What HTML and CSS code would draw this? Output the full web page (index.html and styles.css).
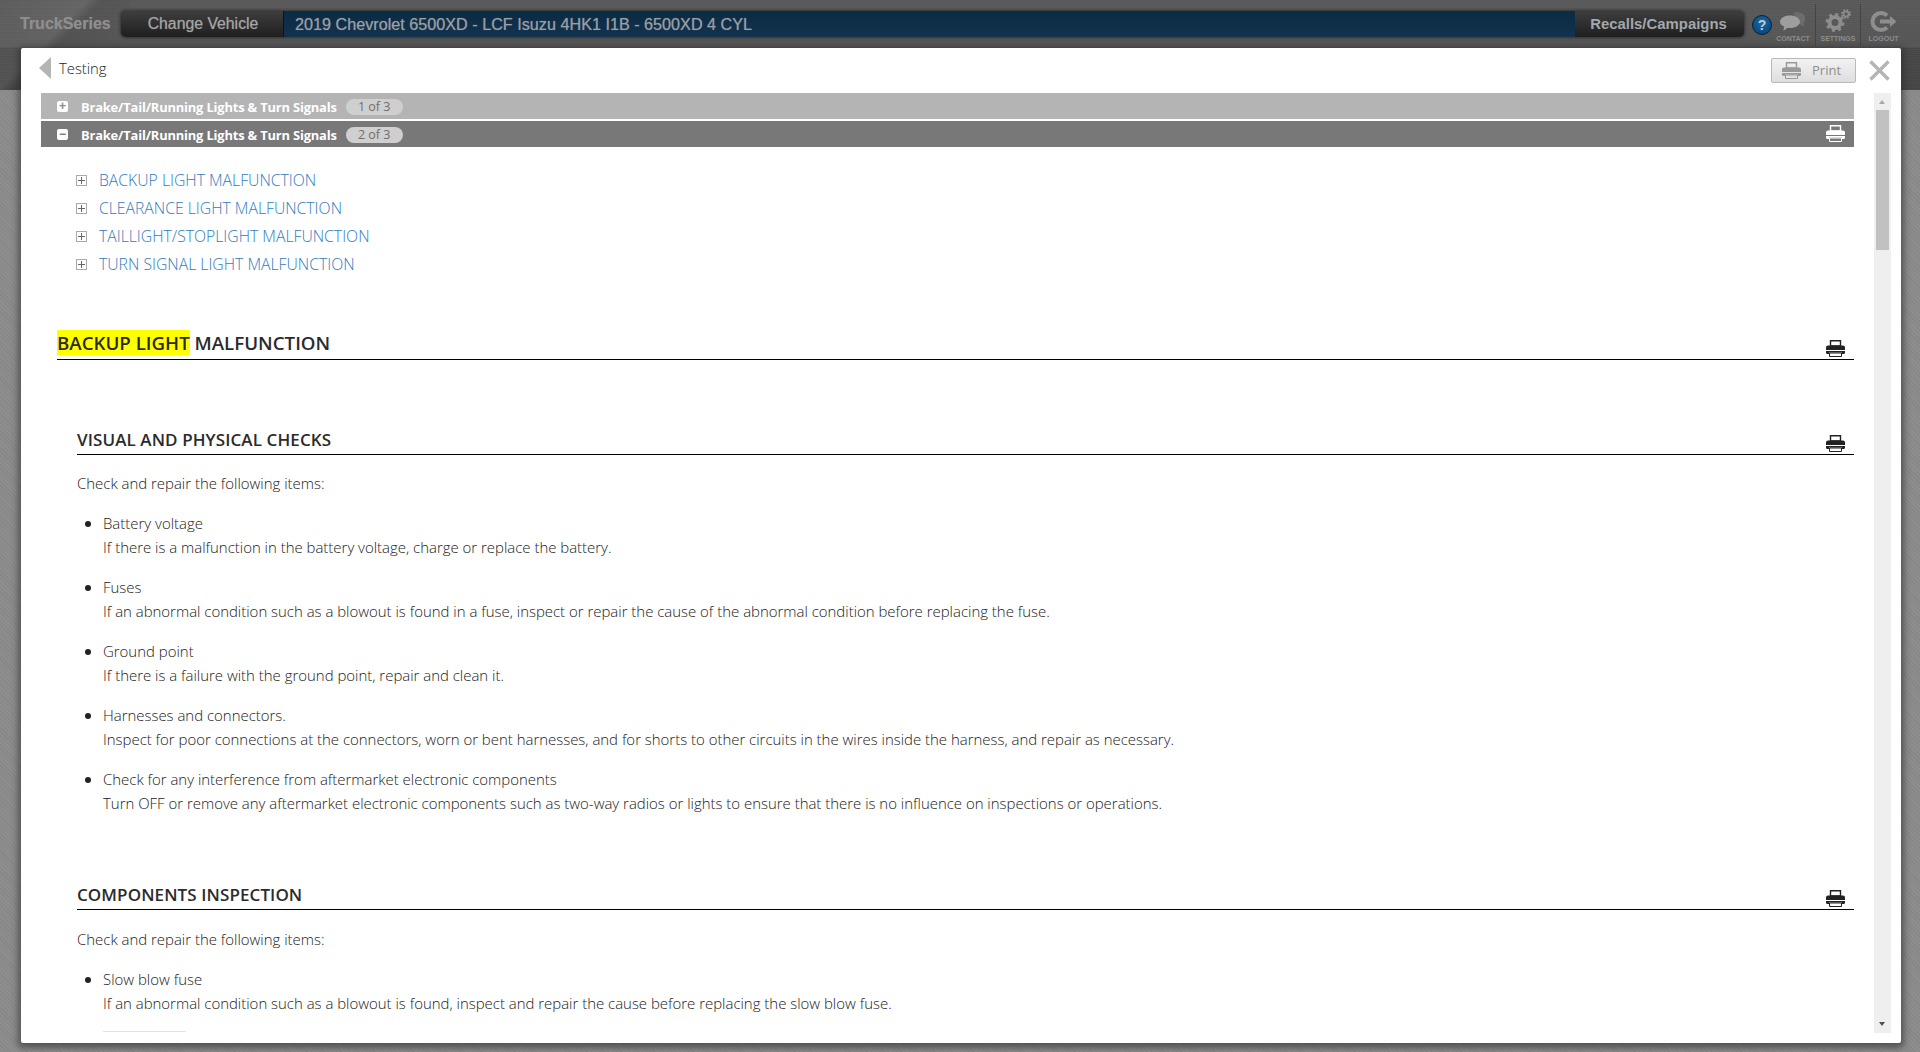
FILE: index.html
```html
<!DOCTYPE html>
<html lang="en">
<head>
<meta charset="utf-8">
<title>Testing</title>
<link rel="stylesheet" href="styles.css">
</head>
<body>
<svg class="defs" width="0" height="0" aria-hidden="true">
  <symbol id="printer" viewBox="0 0 19 17">
    <path d="M4.500.7h10v5.300h-10z" fill="none" stroke="currentColor" stroke-width="1.400"/>
    <path d="M2 5.500h15a2 2 0 0 1 2 2V10H0V7.500a2 2 0 0 1 2-2z" fill="currentColor"/>
    <path d="M0 11h19v1.500a1.500 1.500 0 0 1-1.500 1.500H16v-1.500H3V14H1.500A1.500 1.500 0 0 1 0 12.500z" fill="currentColor"/>
    <path d="M3.500 13h12v3.500h-12z" fill="none" stroke="currentColor" stroke-width="1"/>
  </symbol>
</svg>
<div class="page">
  <header class="topbar">
    <div class="brand">TruckSeries</div>
    <div class="vehicle-bar">
      <div class="btn-dark change">Change Vehicle</div>
      <div class="vehicle-name">2019 Chevrolet 6500XD - LCF Isuzu 4HK1 I1B - 6500XD 4 CYL</div>
      <div class="btn-dark recalls">Recalls/Campaigns</div>
    </div>
    <div class="help">?</div>
    <nav class="tools">
      <div class="tool">
        <svg class="tool-icon" width="26" height="20" viewBox="0 0 26 20"><path d="M13 1c3-1.500 11-1.500 12 4 .5 3-.5 5-1.500 6l1 4-5-3z" fill="#6c6c6c"/><path d="M10 3.500c5.500 0 10 2.700 10 6.200S15.500 16 10 16c-1 0-1.500 0-2.500-.2L3.500 19l.5-4.500C1.500 13.200 0 11.700 0 9.700 0 6.200 4.500 3.500 10 3.500z" fill="#9e9e9e"/></svg>
        <span>CONTACT</span>
      </div>
      <div class="tool">
        <svg class="tool-icon" width="26" height="23" viewBox="0 0 26 23"><circle cx="10" cy="13.500" r="5.500" fill="none" stroke="#8e8e8e" stroke-width="4"/><circle cx="10" cy="13.500" r="8" fill="none" stroke="#8e8e8e" stroke-width="3" stroke-dasharray="3 3.280"/><circle cx="21" cy="5" r="2.500" fill="none" stroke="#8e8e8e" stroke-width="1.500"/><circle cx="21" cy="5" r="4" fill="none" stroke="#8e8e8e" stroke-width="1.800" stroke-dasharray="1.800 1.340"/></svg>
        <span>SETTINGS</span>
      </div>
      <div class="tool">
        <svg class="tool-icon" width="27" height="21" viewBox="0 0 27 21"><path d="M17 4.500A8.500 8.500 0 1 0 17 16.500" fill="none" stroke="#8e8e8e" stroke-width="4"/><path d="M10 8.500h10V5l6.500 5.500L20 16v-3.500H10z" fill="#8e8e8e"/></svg>
        <span>LOGOUT</span>
      </div>
    </nav>
  </header>

  <main class="modal">
    <div class="modal-head">
      <div class="back"></div>
      <div class="modal-title">Testing</div>
      <div class="print-btn"><svg class="print-icon"><use href="#printer"/></svg><span class="print-label">Print</span></div>
      <svg class="close" width="21" height="21" viewBox="0 0 21 21"><path d="M1.500 1.500l18 18M19.500 1.500l-18 18" stroke="#b4b4b4" stroke-width="3.400" fill="none"/></svg>
    </div>
    <div class="modal-body">
      <div class="doc">
        <div class="section-bar bar-light">
          <span class="toggle">+</span><span class="bar-text">Brake/Tail/Running Lights &amp; Turn Signals</span><span class="count">1 of 3</span>
        </div>
        <div class="section-bar bar-dark">
          <span class="toggle">−</span><span class="bar-text">Brake/Tail/Running Lights &amp; Turn Signals</span><span class="count">2 of 3</span>
          <svg class="bar-print"><use href="#printer"/></svg>
        </div>

        <ul class="toc">
          <li><span class="tree-box"></span><a>BACKUP LIGHT MALFUNCTION</a></li>
          <li><span class="tree-box"></span><a>CLEARANCE LIGHT MALFUNCTION</a></li>
          <li><span class="tree-box"></span><a>TAILLIGHT/STOPLIGHT MALFUNCTION</a></li>
          <li><span class="tree-box"></span><a>TURN SIGNAL LIGHT MALFUNCTION</a></li>
        </ul>

        <h1 class="title"><span><mark>BACKUP LIGHT</mark> MALFUNCTION</span><svg class="rule-print"><use href="#printer"/></svg></h1>

        <section class="block first">
          <h2 class="subtitle"><span>VISUAL AND PHYSICAL CHECKS</span><svg class="rule-print"><use href="#printer"/></svg></h2>
          <p class="lead">Check and repair the following items:</p>
          <ul class="items">
            <li>Battery voltage<br>If there is a malfunction in the battery voltage, charge or replace the battery.</li>
            <li>Fuses<br>If an abnormal condition such as a blowout is found in a fuse, inspect or repair the cause of the abnormal condition before replacing the fuse.</li>
            <li>Ground point<br>If there is a failure with the ground point, repair and clean it.</li>
            <li>Harnesses and connectors.<br>Inspect for poor connections at the connectors, worn or bent harnesses, and for shorts to other circuits in the wires inside the harness, and repair as necessary.</li>
            <li>Check for any interference from aftermarket electronic components<br>Turn OFF or remove any aftermarket electronic components such as two-way radios or lights to ensure that there is no influence on inspections or operations.</li>
          </ul>
        </section>

        <section class="block second">
          <h2 class="subtitle"><span>COMPONENTS INSPECTION</span><svg class="rule-print"><use href="#printer"/></svg></h2>
          <p class="lead">Check and repair the following items:</p>
          <ul class="items">
            <li>Slow blow fuse<br>If an abnormal condition such as a blowout is found, inspect and repair the cause before replacing the slow blow fuse.</li>
          </ul>
          <div class="next-highlight"></div>
        </section>
      </div>
      <div class="scrollbar">
        <div class="arrow-up"></div>
        <div class="thumb"></div>
        <div class="arrow-down"></div>
      </div>
    </div>
  </main>
</div>
</body>
</html>
```
FILE: styles.css
```css
* { box-sizing: border-box; }
html, body { margin: 0; height: 100%; }
body { font-family: "Open Sans", "Noto Sans", sans-serif; overflow: hidden; background: #8b8b8b; }
.defs { position: absolute; }
.page {
  position: relative;
  width: 1920px;
  height: 1052px;
  overflow: hidden;
  background:
    linear-gradient(135deg, rgba(255,255,255,.02) 0, rgba(255,255,255,.07) 62px, rgba(0,0,0,.06) 72px, transparent 125px) 0 0 / 130px 90px no-repeat,
    repeating-linear-gradient(0deg, rgba(255,255,255,.02) 0 1px, rgba(0,0,0,.02) 1px 2px) 0 0 / 100% 90px no-repeat,
    linear-gradient(#5a5a5a 0, #565656 47px, #484848 48px, #454545 90px) 0 0 / 100% 90px no-repeat,
    repeating-linear-gradient(45deg, #8f8f8f 0 1px, #878787 1px 2px, #8b8b8b 2px 3px);
}
.topbar {
  height: 48px;
  display: flex;
  align-items: center;
  padding-left: 20px;
}
.brand { width: 101px; font: bold 16px "Liberation Sans", sans-serif; color: #8f8f8f; text-shadow: 0 0 1px #777; }
.vehicle-bar {
  width: 1623px;
  height: 26px;
  display: flex;
  align-items: stretch;
  border-radius: 5px;
  overflow: hidden;
  background: linear-gradient(#0b2b44, #12324e);
  box-shadow: 0 0 3px 1px #333;
  font: 15.800px "Liberation Sans", sans-serif;
  color: #a5a5a5;
  text-shadow: 0 0 1px rgba(165, 165, 165, .6);
}
.btn-dark {
  display: flex;
  align-items: center;
  justify-content: center;
  background: linear-gradient(#3e3e3e, #1f1f1f);
}
.change { width: 163px; border-right: 1px solid #111; padding-left: 2px; }
.vehicle-name { flex: 1; display: flex; align-items: center; padding-left: 11px; font-size: 16.200px; color: #9a9fa3; }
.recalls { width: 169px; padding-right: 2px; font-weight: bold; font-size: 14.900px; color: #a2a8ad; text-shadow: none; }
.help {
  width: 20px;
  height: 20px;
  margin-left: 8px;
  margin-top: 2px;
  border-radius: 50%;
  background: radial-gradient(circle at 50% 35%, #1468a8, #0a4170);
  border: 1px solid #0d1f2d;
  color: #c2ccd4;
  font: bold 14px/18px "Liberation Sans", sans-serif;
  text-align: center;
}
.tools { display: flex; height: 42px; margin-left: -1px; margin-top: 2px; }
.tool {
  width: 45px;
  display: flex;
  flex-direction: column;
  align-items: center;
  justify-content: flex-end;
  font: bold 7px/8px "Liberation Sans", sans-serif;
  color: #8c8c8c;
  border-right: 1px solid #444;
  padding-bottom: 3px;
}
.tool:last-child { border-right: 0; }
.tool-icon { margin-bottom: 3px; }
.modal {
  position: absolute;
  left: 21px;
  top: 48px;
  width: 1880px;
  height: 995px;
  background: #fff;
  display: flex;
  flex-direction: column;
  border-radius: 2px;
  box-shadow: 0 2px 6px 3px rgba(40, 40, 40, .55);
}
.modal-head { height: 45px; flex: none; display: flex; align-items: center; padding: 0 11px 0 18px; }
.back {
  width: 0; height: 0;
  border-top: 11px solid transparent;
  border-bottom: 11px solid transparent;
  border-right: 12px solid #b4b4b4;
  margin-right: 8px;
  margin-bottom: 5px;
}
.modal-title { flex: 1; font-size: 14.800px; color: #222; margin-bottom: 5px; font-weight: 300; }
.print-btn {
  width: 85px;
  height: 25px;
  margin-right: 13px;
  border: 1px solid #b9b9b9;
  border-radius: 2px;
  background: linear-gradient(#f2f2f2, #dedede);
  display: flex;
  align-items: center;
  gap: 11px;
  padding-left: 10px;
  font-size: 13px;
  color: #8e8e8e;
}
.print-label { margin-bottom: 2px; }
.print-icon { width: 19px; height: 17px; color: #9a9a9a; }
.modal-body { flex: 1; min-height: 0; display: flex; align-items: flex-start; padding-left: 20px; height: 940px; }
.doc { width: 1813px; height: 940px; overflow: hidden; }
.scrollbar {
  width: 17px;
  height: 940px;
  margin-left: 20px;
  background: #efefef;
  position: relative;
}
.thumb { position: absolute; left: 2px; right: 2px; top: 17px; height: 140px; background: #c1c1c1; }
.arrow-up, .arrow-down { position: absolute; left: 5px; width: 0; height: 0; border-left: 3.500px solid transparent; border-right: 3.500px solid transparent; }
.arrow-up { top: 7px; border-bottom: 4px solid #a8a8a8; }
.arrow-down { bottom: 7px; border-top: 4px solid #505050; }
.section-bar {
  height: 26px;
  display: flex;
  align-items: center;
  padding: 2px 0 0 16px;
  color: #fff;
  font: bold 12.900px "Open Sans", sans-serif;
  letter-spacing: -.17px;
}
.bar-light { background: #b4b4b4; margin-bottom: 2px; }
.bar-dark { background: #787878; position: relative; }
.toggle {
  width: 11px; height: 11px;
  margin-bottom: 1px;
  border-radius: 2px;
  background: #fff;
  color: #8a8a8a;
  font: bold 12px/10px "Liberation Sans", sans-serif;
  text-align: center;
  letter-spacing: 0;
  margin-right: 13px;
}
.bar-dark .toggle { color: #787878; }
.bar-text { margin-right: 9px; }
.count {
  width: 57px;
  height: 16px;
  border-radius: 8px;
  background: #cfcfcf;
  color: #6e6e6e;
  font: 12.500px/16px "Open Sans", sans-serif;
  letter-spacing: 0;
  text-align: center;
}
.bar-print { position: absolute; right: 9px; top: 4px; width: 19px; height: 17px; color: #fff; }
.toc { list-style: none; margin: 19px 0 0; padding: 0 0 0 35px; }
.toc li { height: 28px; display: flex; align-items: center; font-size: 15.750px; font-weight: 300; }
.tree-box {
  width: 11px; height: 11px;
  margin-right: 12px;
  border: 1px solid #aaa;
  background:
    linear-gradient(#666, #666) center / 7px 1px no-repeat,
    linear-gradient(#666, #666) center / 1px 7px no-repeat,
    #fff;
}
.toc a { color: #2f7cc0; }
.title {
  margin: 49px 0 0 16px;
  height: 33px;
  padding-bottom: 3px;
  display: flex;
  justify-content: space-between;
  align-items: flex-end;
  border-bottom: 1px solid #000;
  font-size: 18.700px;
  font-weight: 600;
  line-height: 27px;
  color: #2b2b2b;
}
mark { background: #ffff00; color: inherit; }
.subtitle {
  margin: 0 0 0 36px;
  height: 29px;
  padding-bottom: 3px;
  display: flex;
  justify-content: space-between;
  align-items: flex-end;
  border-bottom: 1px solid #000;
  font-size: 17px;
  font-weight: 600;
  letter-spacing: .1px;
  line-height: 22px;
  color: #2b2b2b;
}
.rule-print { width: 19px; height: 17px; color: #222; margin: 0 9px -1px 0; }
.block.first { margin-top: 66px; }
.block.second { margin-top: 66px; }
.lead { margin: 16px 0 0 36px; font-size: 14.950px; font-weight: 300; line-height: 24px; color: #222; }
.second .lead { margin-top: 17px; }
.items { list-style: none; margin: 16px 0 0 36px; padding: 0 0 0 26px; font-size: 14.950px; font-weight: 300; line-height: 24px; color: #222; }
.items li { margin-bottom: 16px; }
.items li::before {
  content: "";
  display: inline-block;
  width: 6px;
  height: 6px;
  margin: 0 12px 2px -18px;
  border-radius: 50%;
  background: #222;
}
.next-highlight { width: 83px; height: 1px; margin: 1px 0 0 62px; background: #ffff00; }
```
